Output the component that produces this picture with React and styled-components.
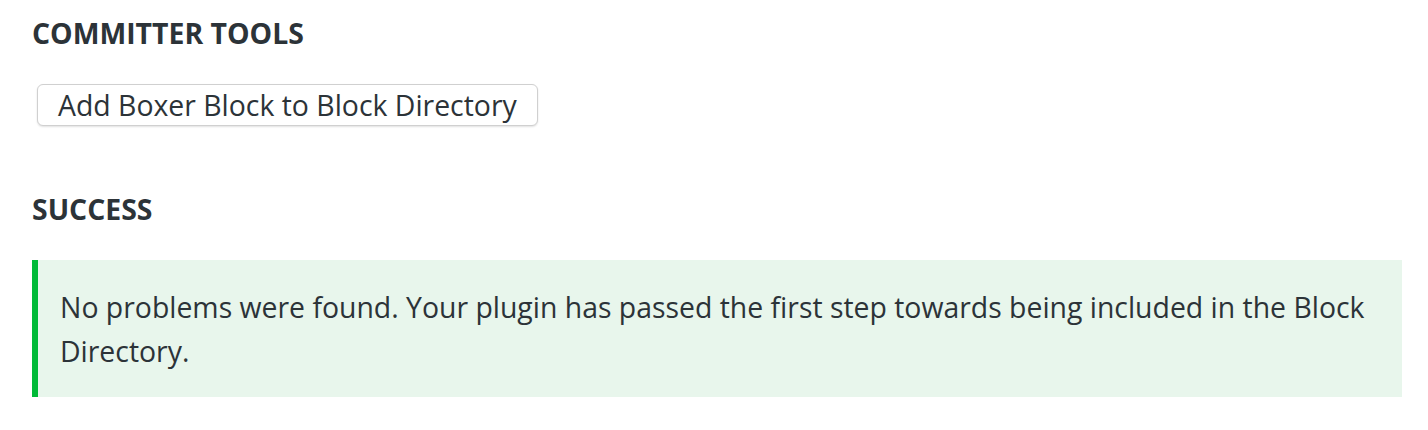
import { createGlobalStyle, styled } from "styled-components";

const GlobalStyle = createGlobalStyle`
    body {
        margin: 0;
        background: #ffffff;
        font-family: "Open Sans", "Noto Sans", sans-serif;
        color: #2c3338;
    }
`;

function App() {
    return (
        <Page>
            <GlobalStyle />
            <Section>
                <Heading>Committer Tools</Heading>
                <ToolButton type="button">Add Boxer Block to Block Directory</ToolButton>
            </Section>
            <Section>
                <Heading>Success</Heading>
                <Notice>
                    <p>No problems were found. Your plugin has passed the first step towards being included in the Block Directory.</p>
                </Notice>
            </Section>
        </Page>
    );
}

const Page = styled.div`
    display: flex;
    flex-direction: column;
    gap: 64px;
    padding: 14px 26px 0 32px;
`;

const Section = styled.section`
    display: flex;
    flex-direction: column;
    align-items: flex-start;
`;

const Heading = styled.h2`
    margin: 0 0 32px;
    font-size: 28.4px;
    line-height: 38px;
    font-weight: 700;
    text-transform: uppercase;
    color: #2c3338;
`;

const ToolButton = styled.button`
    margin-left: 5px;
    height: 42px;
    padding: 0 20px;
    font-family: inherit;
    font-size: 28.4px;
    color: #2c3338;
    background: #ffffff;
    border: 1px solid #d0d0d0;
    border-radius: 6px;
    box-shadow: 0 1px 2px rgba(0, 0, 0, 0.12);
    cursor: pointer;
`;

const Notice = styled.div`
    align-self: stretch;
    background: #e8f6ec;
    border-left: 6px solid #00ba37;
    padding: 25px 22px 24px;

    p {
        margin: 0;
        font-size: 28.4px;
        line-height: 44px;
        color: #2c3338;
    }
`;

export default App;
